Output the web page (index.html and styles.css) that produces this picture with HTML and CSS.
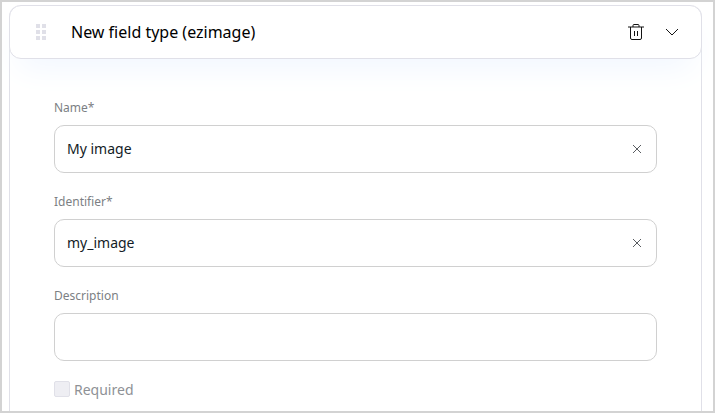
FILE: index.html
```html
<!DOCTYPE html>
<html lang="en">
<head>
<meta charset="utf-8">
<meta name="viewport" content="width=device-width, initial-scale=1">
<title>Field definition</title>
<link rel="stylesheet" href="styles.css">
</head>
<body>
<main class="frame">
  <section class="card">
    <header class="card-header">
      <svg class="handle" width="10" height="16" viewBox="0 0 10 16" aria-hidden="true">
        <path d="M0 0h4v4H0zM6 0h4v4H6zM0 6h4v4H0zM6 6h4v4H6zM0 12h4v4H0zM6 12h4v4H6z"/>
      </svg>
      <h1 class="title">New field type (ezimage)</h1>
      <button class="icon-button" type="button" aria-label="Delete field">
        <svg width="16" height="16" viewBox="0 0 16 16" aria-hidden="true">
          <path d="M0 3h16M5 3V1.500q0-1 1-1h4q1 0 1 1V3M2.500 3v11q0 1.500 1.500 1.500h8q1.500 0 1.500-1.500V3M6.500 7v5M9.500 7v5"/>
        </svg>
      </button>
      <button class="icon-button" type="button" aria-label="Collapse field">
        <svg width="16" height="16" viewBox="0 0 16 16" aria-hidden="true">
          <path d="M2 5l6 6 6-6"/>
        </svg>
      </button>
    </header>
    <form class="card-body">
      <div class="field">
        <label class="label" for="name">Name*</label>
        <div class="control">
          <input class="input" id="name" type="text" value="My image">
          <button class="clear" type="button" aria-label="Clear name">
            <svg width="10" height="10" viewBox="0 0 10 10" aria-hidden="true"><path d="M1 1l8 8M9 1l-8 8"/></svg>
          </button>
        </div>
      </div>
      <div class="field">
        <label class="label" for="identifier">Identifier*</label>
        <div class="control">
          <input class="input" id="identifier" type="text" value="my_image">
          <button class="clear" type="button" aria-label="Clear identifier">
            <svg width="10" height="10" viewBox="0 0 10 10" aria-hidden="true"><path d="M1 1l8 8M9 1l-8 8"/></svg>
          </button>
        </div>
      </div>
      <div class="field">
        <label class="label" for="description">Description</label>
        <div class="control">
          <input class="input" id="description" type="text">
        </div>
      </div>
      <div class="check">
        <input class="checkbox" id="required" type="checkbox" disabled>
        <label class="check-label" for="required">Required</label>
      </div>
    </form>
  </section>
</main>
</body>
</html>
```
FILE: styles.css
```css
* {
  box-sizing: border-box;
}

body {
  margin: 0;
  background: #fff;
  color: #131c26;
  font-family: "Noto Sans", sans-serif;
}

.frame {
  display: flex;
  flex-direction: column;
  height: 100vh;
  padding: 3px 11px 0 7px;
  border: 2px solid #d3d3d3;
  overflow: hidden;
}

.card {
  flex: 1 0 auto;
  border: 1px solid #e0e0e8;
  border-width: 0 1px;
  border-radius: 12px 12px 0 0;
}

.card-header {
  display: flex;
  align-items: center;
  gap: 20px;
  height: 54px;
  margin: 0 -1px;
  padding: 0 21px 0 26px;
  border: 1px solid #e0e0e8;
  border-radius: 12px;
  background: #fff;
  box-shadow: 0 18px 32px -10px #f0f6ff;
}

.handle {
  fill: #e0e0e8;
}

.title {
  flex: 1;
  margin: 0 0 0 5px;
  color: #000;
  font-size: 16px;
  font-weight: 400;
  line-height: 24px;
}

.icon-button,
.clear {
  display: flex;
  padding: 0;
  border: 0;
  background: none;
}

.icon-button svg {
  fill: none;
  stroke: #131313;
}

.card-body {
  display: flex;
  flex-direction: column;
  gap: 20px;
  padding: 40px 44px 12px;
}

.field {
  display: flex;
  flex-direction: column;
  gap: 8px;
}

.label {
  color: #7c7f84;
  font-size: 12px;
  line-height: 18px;
}

.control {
  display: flex;
  align-items: center;
  height: 48px;
  padding: 0 14px 0 12px;
  border: 1px solid #d0d0d0;
  border-radius: 10px;
  background: #fff;
}

.input {
  flex: 1;
  min-width: 0;
  padding: 0;
  border: 0;
  outline: 0;
  background: none;
  color: inherit;
  font: 14px/20px "Noto Sans", sans-serif;
}

.clear svg {
  fill: none;
  stroke: #5a5d61;
}

.check {
  display: flex;
  align-items: flex-start;
  gap: 4px;
}

.checkbox {
  width: 16px;
  height: 16px;
  margin: 0;
  border: 1px solid #e0e0e8;
  border-radius: 2px;
  background: #eeeef3;
  appearance: none;
}

.check-label {
  color: #8e9196;
  font-size: 14px;
  line-height: 18px;
}
```
